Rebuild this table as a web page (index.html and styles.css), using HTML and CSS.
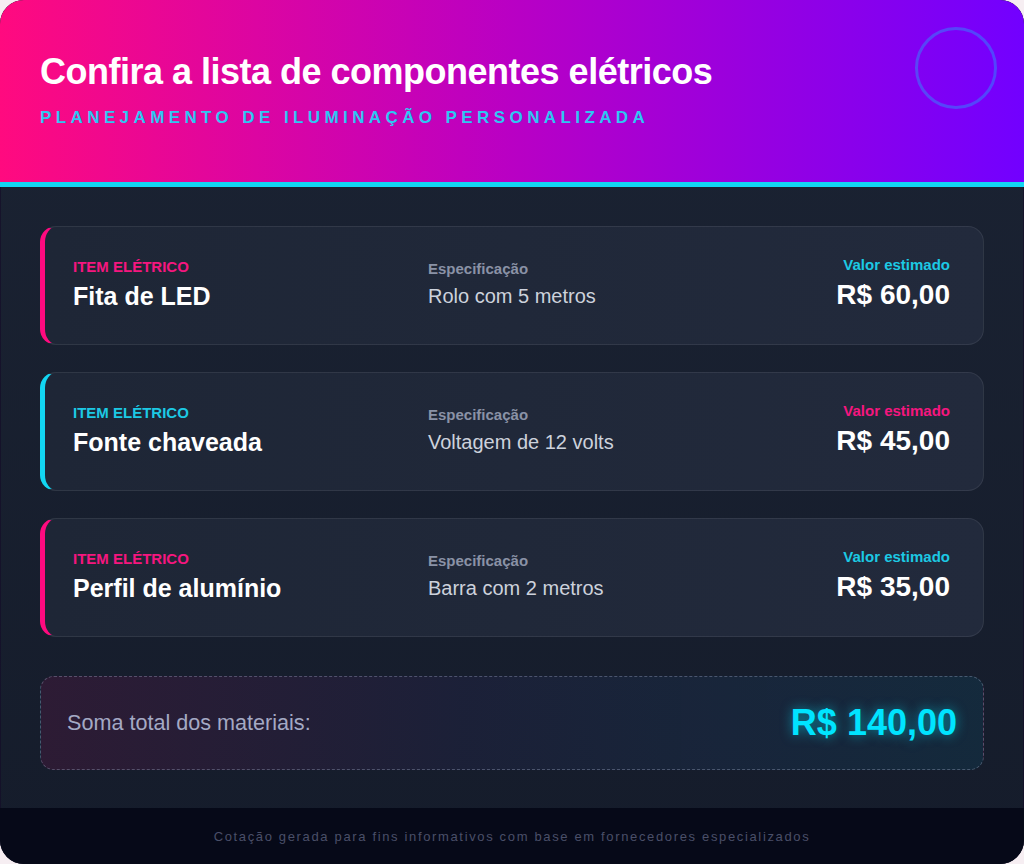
FILE: index.html
```html
<!DOCTYPE html>
<html lang="pt-BR">
<head>
<meta charset="utf-8">
<title>Lista de componentes elétricos</title>
<link rel="stylesheet" href="styles.css">
</head>
<body>
<div class="sheet">
  <header class="hero">
    <h1 class="hero-title">Confira a lista de componentes elétricos</h1>
    <p class="hero-sub">PLANEJAMENTO DE ILUMINAÇÃO PERSONALIZADA</p>
    <span class="hero-ring"></span>
  </header>
  <main class="content">
    <section class="items">
      <article class="item item-pink">
        <div class="col-name">
          <span class="tag tag-pink">ITEM ELÉTRICO</span>
          <span class="name">Fita de LED</span>
        </div>
        <div class="col-spec">
          <span class="spec-label">Especificação</span>
          <span class="spec-value">Rolo com 5 metros</span>
        </div>
        <div class="col-price">
          <span class="price-label price-cyan">Valor estimado</span>
          <span class="price">R$ 60,00</span>
        </div>
      </article>
      <article class="item item-cyan">
        <div class="col-name">
          <span class="tag tag-cyan">ITEM ELÉTRICO</span>
          <span class="name">Fonte chaveada</span>
        </div>
        <div class="col-spec">
          <span class="spec-label">Especificação</span>
          <span class="spec-value">Voltagem de 12 volts</span>
        </div>
        <div class="col-price">
          <span class="price-label price-pink">Valor estimado</span>
          <span class="price">R$ 45,00</span>
        </div>
      </article>
      <article class="item item-pink">
        <div class="col-name">
          <span class="tag tag-pink">ITEM ELÉTRICO</span>
          <span class="name">Perfil de alumínio</span>
        </div>
        <div class="col-spec">
          <span class="spec-label">Especificação</span>
          <span class="spec-value">Barra com 2 metros</span>
        </div>
        <div class="col-price">
          <span class="price-label price-cyan">Valor estimado</span>
          <span class="price">R$ 35,00</span>
        </div>
      </article>
    </section>
    <section class="total">
      <span class="total-label">Soma total dos materiais:</span>
      <span class="total-value">R$ 140,00</span>
    </section>
  </main>
  <footer class="foot">
    <p class="foot-text">Cotação gerada para fins informativos com base em fornecedores especializados</p>
  </footer>
</div>
</body>
</html>
```
FILE: styles.css
```css
* { box-sizing: border-box; }
html, body { margin: 0; padding: 0; }
body {
  background: #f6eef2;
  font-family: "Liberation Sans", Arial, sans-serif;
  width: 1024px;
  height: 864px;
  overflow: hidden;
}
.sheet {
  width: 1024px;
  height: 864px;
  border-radius: 24px;
  overflow: hidden;
  display: flex;
  flex-direction: column;
  background: linear-gradient(180deg, #1b2333 0%, #151c2b 100%);
  box-shadow: inset 0 0 0 1px rgba(20, 10, 40, 0.6);
}
.hero {
  position: relative;
  height: 187px;
  flex: none;
  padding: 50px 40px 0;
  background: linear-gradient(90deg, #ff0a7f 0%, #b900c4 50%, #7200ff 100%);
  border-bottom: 5px solid #12d6f2;
}
.hero-title {
  margin: 0;
  font-size: 36px;
  line-height: 43px;
  font-weight: 700;
  letter-spacing: -0.5px;
  color: #ffffff;
}
.hero-sub {
  margin: 15px 0 0;
  font-size: 17px;
  line-height: 20px;
  font-weight: 700;
  letter-spacing: 4.4px;
  color: #2fc6f2;
}
.hero-ring {
  position: absolute;
  top: 27px;
  right: 27px;
  width: 82px;
  height: 82px;
  border-radius: 50%;
  border: 3px solid rgba(0, 230, 255, 0.3);
}
.content {
  flex: 1;
  padding: 39px 40px 38px;
  display: flex;
  flex-direction: column;
}
.items {
  display: flex;
  flex-direction: column;
  gap: 27px;
}
.item {
  height: 119px;
  display: grid;
  grid-template-columns: 355px 1fr auto;
  align-items: center;
  padding: 0 33px 4px 28px;
  border: 1px solid rgba(255, 255, 255, 0.08);
  border-left-width: 5px;
  border-radius: 16px;
  background: linear-gradient(90deg, #1e2636 0%, #222a3c 100%);
}
.item-pink { border-left-color: #ff0a7f; }
.item-cyan { border-left-color: #12d6f2; }
.col-name, .col-spec, .col-price {
  display: flex;
  flex-direction: column;
}
.col-price { align-items: flex-end; }
.tag {
  font-size: 15px;
  line-height: 17px;
  font-weight: 700;
}
.tag-pink { color: #f5167f; }
.tag-cyan { color: #1cc9e4; }
.name {
  margin-top: 7px;
  font-size: 25px;
  line-height: 28px;
  font-weight: 700;
  color: #ffffff;
}
.spec-label {
  font-size: 15px;
  line-height: 18px;
  font-weight: 700;
  color: #8a92a6;
}
.spec-value {
  margin-top: 6px;
  font-size: 20px;
  line-height: 24px;
  color: #cdd2dc;
}
.price-label {
  font-size: 15px;
  line-height: 18px;
  font-weight: 700;
}
.price-cyan { color: #1cc9e4; }
.price-pink { color: #f5167f; }
.price {
  margin-top: 5px;
  font-size: 28px;
  line-height: 32px;
  font-weight: 700;
  color: #ffffff;
}
.total {
  margin-top: 39px;
  height: 94px;
  display: flex;
  align-items: center;
  justify-content: space-between;
  padding: 0 26px;
  border: 1px dashed rgba(170, 180, 210, 0.35);
  border-radius: 14px;
  background: linear-gradient(90deg, rgba(255, 10, 127, 0.1) 0%, rgba(80, 60, 160, 0.1) 45%, rgba(0, 200, 255, 0.08) 100%);
}
.total-label {
  font-size: 21.6px;
  color: #a4a9c4;
}
.total-value {
  font-size: 36px;
  font-weight: 700;
  color: #00e4ff;
  text-shadow: 0 0 12px rgba(0, 228, 255, 0.55);
}
.foot {
  flex: none;
  height: 56px;
  display: flex;
  align-items: center;
  justify-content: center;
  background: #060918;
}
.foot-text {
  margin: 0;
  font-size: 13px;
  letter-spacing: 1.65px;
  color: #4a4f68;
}
```
